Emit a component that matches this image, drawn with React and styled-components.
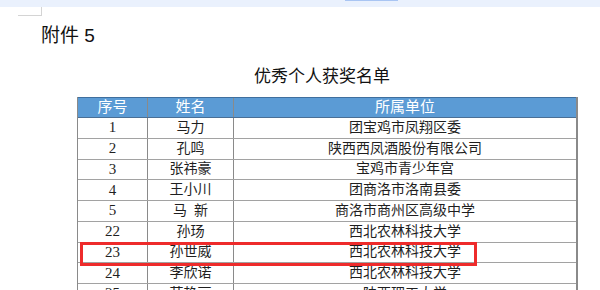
import React from 'react';
import styled, { createGlobalStyle } from 'styled-components';

const GlobalStyle = createGlobalStyle`
  html, body {
    margin: 0;
    padding: 0;
    background: #ffffff;
  }
  body {
    width: 600px;
    height: 290px;
    overflow: hidden;
    font-family: "Liberation Sans", "Noto Sans CJK SC", sans-serif;
    color: #1a1a1a;
  }
`;

const TopBand = styled.div`
  height: 7px;
  background: #eaf1fd;
  display: flex;
  align-items: flex-start;
`;

const BandMark = styled.div`
  margin-left: 345px;
  width: 53px;
  height: 1px;
  background: #a9c5f3;
`;

const CornerMark = styled.div`
  margin-left: 18px;
  width: 23px;
  height: 8px;
  border-right: 1px solid #d4d4d4;
  border-bottom: 1px solid #d4d4d4;
`;

const Attachment = styled.h2`
  margin: 10px 0 0 41px;
  font-size: 19px;
  line-height: 20px;
  font-weight: 400;
  color: #111;
`;

const Title = styled.h1`
  margin: 20px 0 0 77px;
  width: 490px;
  text-align: center;
  font-size: 17px;
  line-height: 21px;
  font-weight: 400;
  color: #111;
`;

const TableWrap = styled.div`
  position: relative;
  margin: 10px 0 0 77px;
  width: 501px;
`;

const Table = styled.div`
  border-left: 1px solid #8a8a8a;
  border-right: 2px solid #8a8a8a;
  font-family: "Liberation Serif", "Noto Sans CJK SC", serif;
`;

const Row = styled.div`
  display: grid;
  grid-template-columns: 70px 86px 1fr;
  height: ${p => (p.$head ? '21px' : '20.75px')};
  box-sizing: border-box;
  background: ${p => (p.$head ? '#5b9bd5' : '#ffffff')};
  border-top: ${p => (p.$head ? '1px solid #3f6f9e' : 'none')};
  border-bottom: 1px solid ${p => (p.$head ? '#4a6f95' : '#a2a2a2')};
  color: ${p => (p.$head ? '#ffffff' : '#1f1f1f')};
  font-size: ${p => (p.$head ? '15px' : '14px')};
`;

const Cell = styled.div`
  display: flex;
  align-items: center;
  justify-content: center;
  white-space: pre;
  border-right: ${p => (p.$last ? 'none' : '1px solid #8a8a8a')};
  font-size: ${p => (p.$num ? '15px' : 'inherit')};
  line-height: 1;
`;

const Highlight = styled.div`
  position: absolute;
  left: 2.5px;
  top: 145px;
  width: 397px;
  height: 24px;
  box-sizing: border-box;
  border: 3px solid #ee2b2b;
  pointer-events: none;
`;

const rows = [
  ['1', '马力', '团宝鸡市凤翔区委'],
  ['2', '孔鸣', '陕西西凤酒股份有限公司'],
  ['3', '张祎豪', '宝鸡市青少年宫'],
  ['4', '王小川', '团商洛市洛南县委'],
  ['5', '马\u2002新', '商洛市商州区高级中学'],
  ['22', '孙玚', '西北农林科技大学'],
  ['23', '孙世威', '西北农林科技大学'],
  ['24', '李欣诺', '西北农林科技大学'],
  ['25', '范艳丽', '陕西理工大学'],
];

export default function App() {
  return (
    <>
      <GlobalStyle />
      <TopBand>
        <BandMark />
      </TopBand>
      <CornerMark />
      <Attachment>附件 5</Attachment>
      <Title>优秀个人获奖名单</Title>
      <TableWrap>
        <Table>
          <Row $head>
            <Cell>序号</Cell>
            <Cell>姓名</Cell>
            <Cell $last>所属单位</Cell>
          </Row>
          {rows.map(([no, name, unit]) => (
            <Row key={no}>
              <Cell $num>{no}</Cell>
              <Cell>{name}</Cell>
              <Cell $last>{unit}</Cell>
            </Row>
          ))}
        </Table>
        <Highlight />
      </TableWrap>
    </>
  );
}
